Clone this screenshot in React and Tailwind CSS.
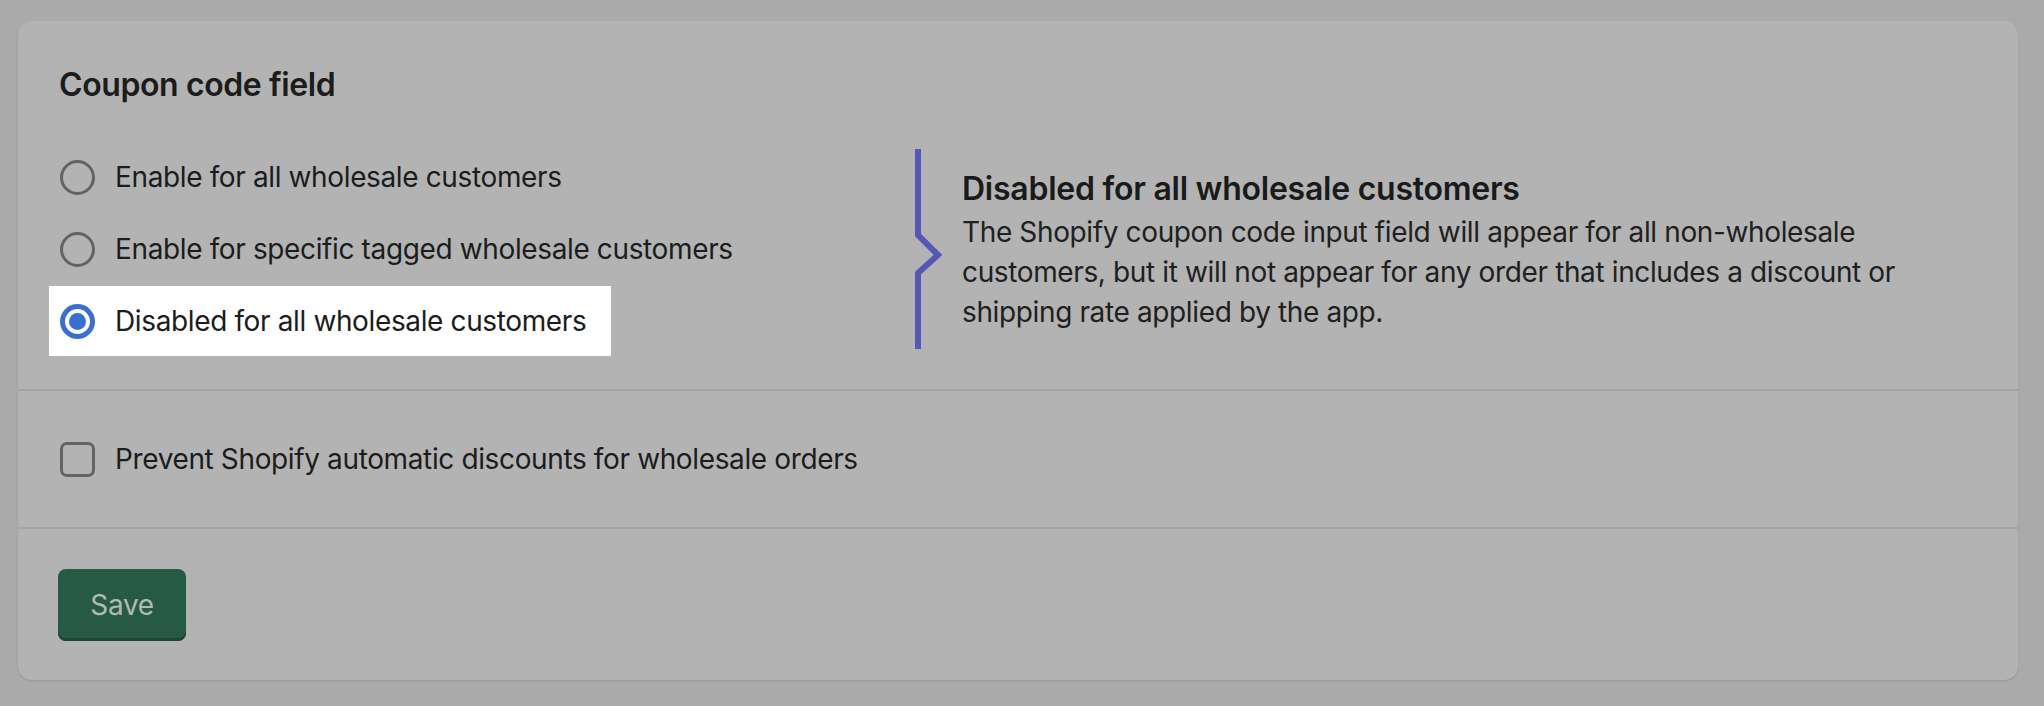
import { useState } from "react";

const options = [
  { id: "all", label: "Enable for all wholesale customers" },
  { id: "tagged", label: "Enable for specific tagged wholesale customers" },
  { id: "disabled", label: "Disabled for all wholesale customers" },
];

function Radio({ checked }) {
  if (checked) {
    return (
      <span className="flex size-[35px] shrink-0 items-center justify-center rounded-full bg-[#3b6fcc]">
        <span className="flex size-[25px] items-center justify-center rounded-full bg-white">
          <span className="size-[17px] rounded-full bg-[#3b6fcc]" />
        </span>
      </span>
    );
  }
  return <span className="size-[35px] shrink-0 rounded-full border-[3.5px] border-[#616367]" />;
}

export default function App() {
  const [selected, setSelected] = useState("disabled");
  const [prevent, setPrevent] = useState(false);

  return (
    <div
      className="min-h-[706px] bg-[#aaaaaa] pt-[21px] pl-[18px] text-[#1c1c1c]"
      style={{ fontFamily: "Inter, 'Noto Sans', sans-serif" }}
    >
      <div className="w-[2000px] overflow-hidden rounded-[14px] bg-[#b3b3b3] shadow-[0_1px_2px_rgba(0,0,0,0.12)]">
        {/* coupon code options */}
        <div className="px-[41px] pt-[40px] pb-[33px]">
          <h2 className="text-[32px] leading-[48px] font-semibold tracking-[-0.4px]">Coupon code field</h2>
          <div className="mt-[33px] flex items-center">
            <div className="flex w-[857px] flex-col gap-[2px]">
              {options.map((o) => {
                const checked = selected === o.id;
                return (
                  <label
                    key={o.id}
                    onClick={() => setSelected(o.id)}
                    className={
                      checked
                        ? "-ml-[10px] flex h-[70px] w-[562px] cursor-pointer items-center gap-[20px] bg-white pl-[11px]"
                        : "flex h-[70px] cursor-pointer items-center gap-[20px] pl-[1px]"
                    }
                  >
                    <Radio checked={checked} />
                    <span className="text-[28px] leading-[40px] tracking-[-0.37px]">{o.label}</span>
                  </label>
                );
              })}
            </div>
            <div className="flex h-[200px] items-stretch">
              <svg width="30" height="200" viewBox="0 0 30 200" className="shrink-0">
                <polyline
                  points="3,0 3,86 23,106 3,124 3,200"
                  fill="none"
                  stroke="#5457b8"
                  strokeWidth="6"
                  strokeLinejoin="miter"
                />
              </svg>
              <div className="flex flex-col justify-center pl-[17px]">
                <h3 className="text-[32px] leading-[46px] font-semibold tracking-[-0.25px] text-[#1a1a1a]">
                  Disabled for all wholesale customers
                </h3>
                <p className="w-[1015px] text-[28px] leading-[40px] tracking-[-0.37px] text-[#202020]">
                  The Shopify coupon code input field will appear for all non-wholesale customers, but it will not
                  appear for any order that includes a discount or shipping rate applied by the app.
                </p>
              </div>
            </div>
          </div>
        </div>

        <div className="h-[2px] bg-[#a3a3a3]" />

        {/* automatic discounts */}
        <div className="flex h-[136px] items-center px-[42px]">
          <label className="flex cursor-pointer items-center gap-[20px]" onClick={() => setPrevent(!prevent)}>
            <span className="size-[35px] shrink-0 rounded-[7px] border-[3.5px] border-[#616367]" />
            <span className="text-[28px] leading-[40px] tracking-[-0.37px]">
              Prevent Shopify automatic discounts for wholesale orders
            </span>
          </label>
        </div>

        <div className="h-[2px] bg-[#a3a3a3]" />

        <div className="px-[40px] pt-[40px] pb-[39px]">
          <button className="h-[72px] w-[128px] rounded-[8px] bg-[#265a45] text-[28px] tracking-[-0.37px] text-[#b0bab5] shadow-[inset_0_-3px_0_#1d4535]">
            Save
          </button>
        </div>
      </div>
    </div>
  );
}
